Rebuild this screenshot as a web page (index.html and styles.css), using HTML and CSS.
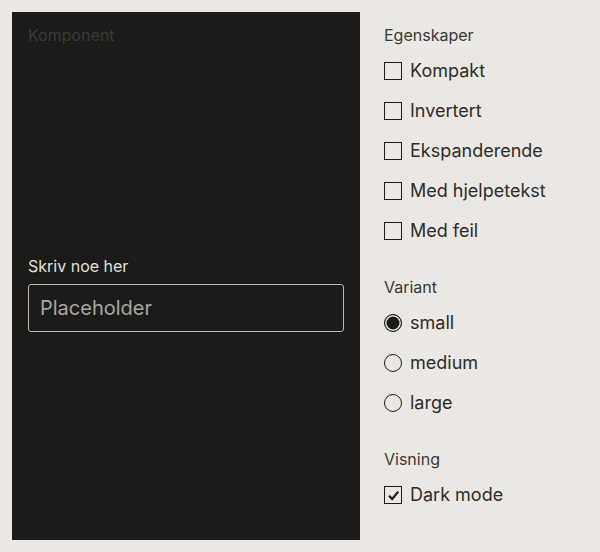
FILE: index.html
```html
<!DOCTYPE html>
<html lang="no">
<head>
<meta charset="utf-8">
<title>Komponent</title>
<link rel="stylesheet" href="styles.css">
</head>
<body>
<div class="page">
  <section class="preview">
    <div class="preview-title">Komponent</div>
    <div class="preview-body">
      <div class="field">
        <label class="field-label" for="inp">Skriv noe her</label>
        <input id="inp" class="field-input" type="text" placeholder="Placeholder">
      </div>
    </div>
  </section>
  <aside class="controls">
    <div class="group">
      <div class="group-title">Egenskaper</div>
      <div class="option"><span class="box"></span><span class="opt-label">Kompakt</span></div>
      <div class="option"><span class="box"></span><span class="opt-label">Invertert</span></div>
      <div class="option"><span class="box"></span><span class="opt-label">Ekspanderende</span></div>
      <div class="option"><span class="box"></span><span class="opt-label">Med hjelpetekst</span></div>
      <div class="option"><span class="box"></span><span class="opt-label">Med feil</span></div>
    </div>
    <div class="group">
      <div class="group-title">Variant</div>
      <div class="option"><span class="radio checked"></span><span class="opt-label">small</span></div>
      <div class="option"><span class="radio"></span><span class="opt-label">medium</span></div>
      <div class="option"><span class="radio"></span><span class="opt-label">large</span></div>
    </div>
    <div class="group">
      <div class="group-title">Visning</div>
      <div class="option"><span class="box">
        <svg class="check" viewBox="0 0 15 15" width="15" height="15"><path d="M3 7.8 L6.2 11 L12.2 3.6" fill="none" stroke="#1c1b19" stroke-width="2.2"/></svg>
      </span><span class="opt-label">Dark mode</span></div>
    </div>
  </aside>
</div>
</body>
</html>
```
FILE: styles.css
```css
* { box-sizing: border-box; }
html, body {
  margin: 0;
  background: #ebe8e3;
  font-family: "Inter", "Noto Sans", sans-serif;
  color: #2e2c2a;
}
.page {
  display: flex;
  gap: 24px;
  padding: 12px;
  height: 552px;
}
.preview {
  width: 348px;
  height: 528px;
  background: #1c1b19;
  padding: 11px 16px 16px;
  display: flex;
  flex-direction: column;
}
.preview-title {
  font-size: 16px;
  line-height: 24px;
  color: #3d3b38;
}
.preview-body {
  flex: 1;
  display: flex;
  flex-direction: column;
  justify-content: center;
  padding-top: 15px;
}
.field { display: flex; flex-direction: column; gap: 6px; }
.field-label {
  font-size: 16px;
  line-height: 24px;
  color: #e4e1dc;
}
.field-input {
  width: 316px;
  height: 48px;
  border: 1px solid #bdbab5;
  border-radius: 3px;
  background: transparent;
  padding: 0 11px;
  font-family: inherit;
  font-size: 20px;
  color: #e4e1dc;
  outline: none;
}
.field-input::placeholder { color: #a9a6a1; }
.controls {
  flex: 1;
  padding-top: 11px;
  display: flex;
  flex-direction: column;
  gap: 24px;
}
.group { display: flex; flex-direction: column; }
.group-title {
  font-size: 16px;
  line-height: 24px;
  margin-bottom: 4px;
  color: #3a3835;
}
.option {
  height: 40px;
  display: flex;
  align-items: center;
  gap: 8px;
}
.opt-label {
  font-size: 18px;
  line-height: 24px;
  color: #2e2c2a;
}
.box {
  width: 18px;
  height: 18px;
  border: 1.5px solid #1c1b19;
  display: flex;
  align-items: center;
  justify-content: center;
}
.radio {
  width: 18px;
  height: 18px;
  border: 1.5px solid #1c1b19;
  border-radius: 50%;
}
.radio.checked {
  background: #1c1b19;
  box-shadow: inset 0 0 0 1.5px #ebe8e3;
}
.check { display: block; }
```
